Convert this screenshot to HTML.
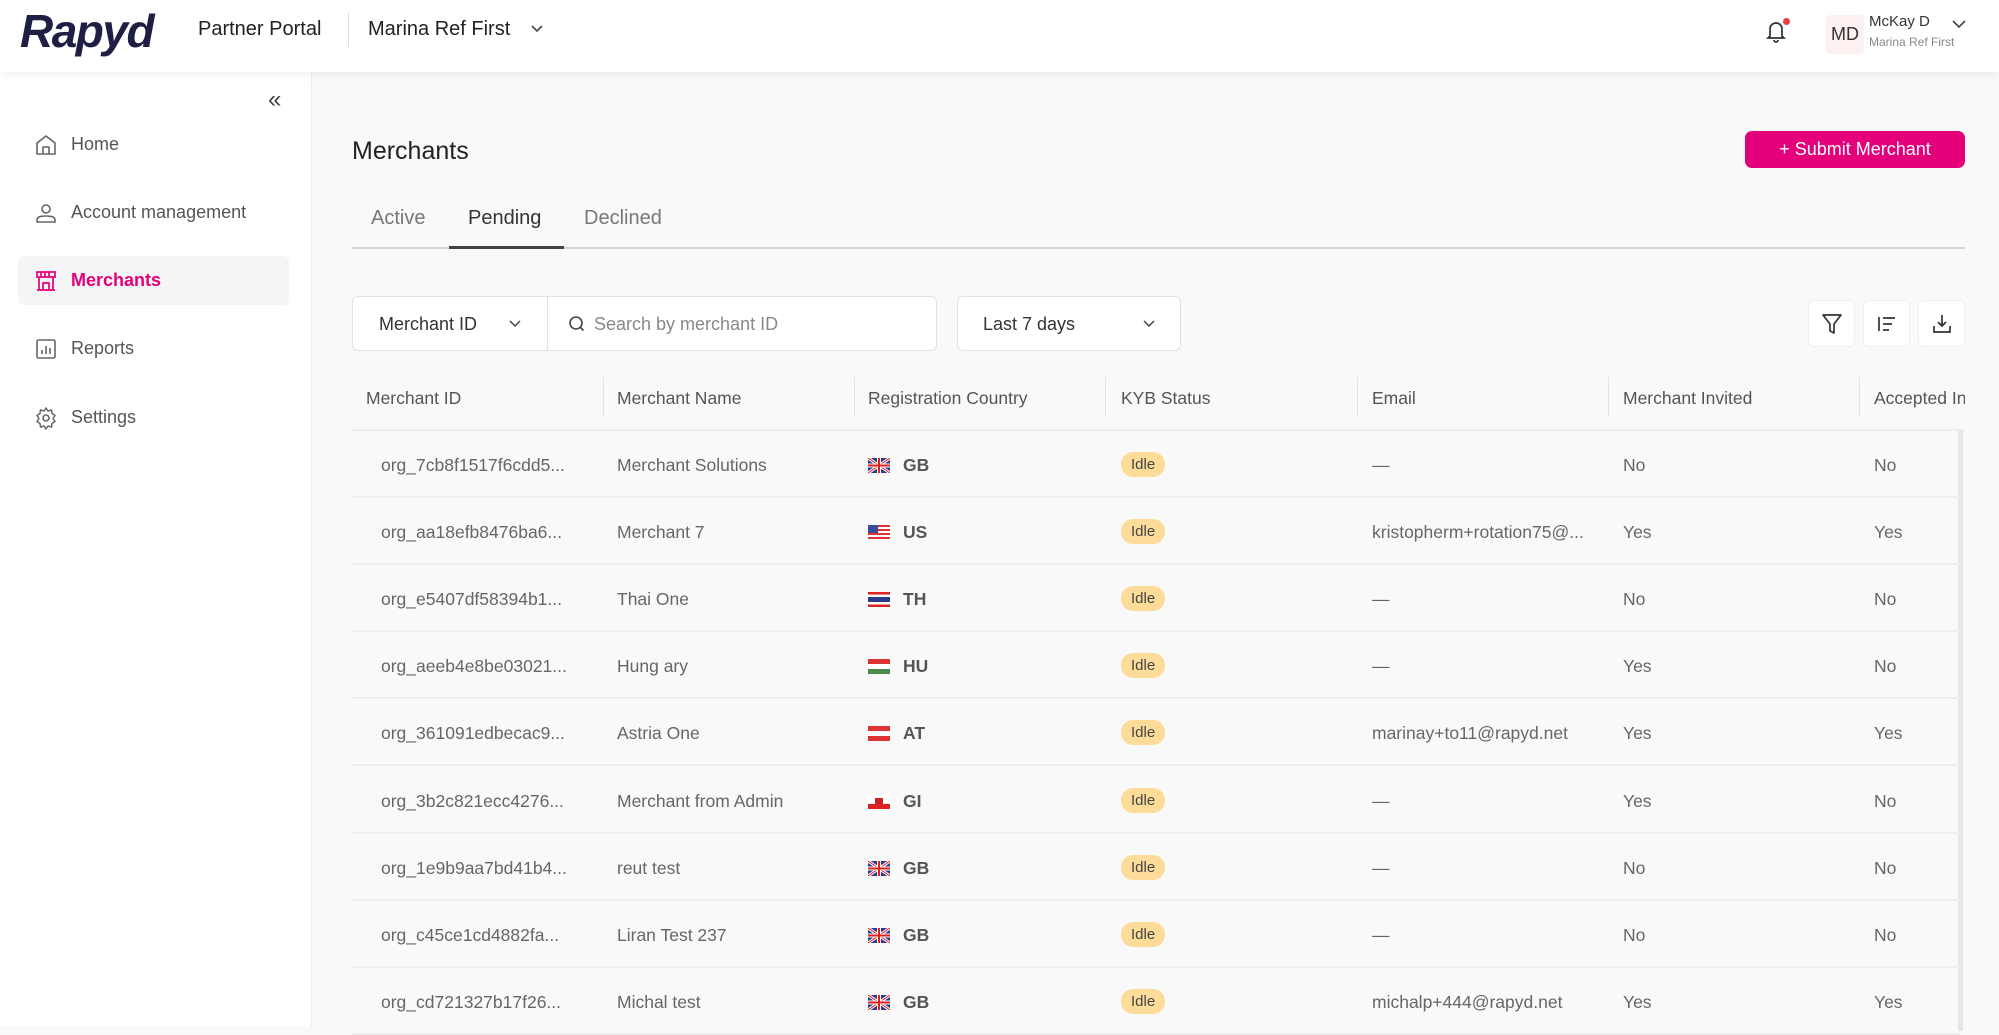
<!DOCTYPE html>
<html><head><meta charset="utf-8"><style>
*{box-sizing:border-box;margin:0;padding:0}
body{width:1999px;height:1026px;overflow:hidden;font-family:"Liberation Sans",sans-serif;background:#f9f9f9;position:relative;color:#333}
.abs{position:absolute}
.hdr{left:0;top:0;width:1999px;height:72px;background:#fff;box-shadow:0 2px 10px rgba(0,0,0,.07);z-index:2}
.side{left:0;top:72px;width:312px;height:954px;background:#fff;border-right:1px solid #ececec}
.nav{position:absolute;left:18px;width:271px;height:49px;border-radius:6px;display:flex;align-items:center;font-size:18px;color:#555}
.nav svg{position:absolute;left:16px}
.nav span{position:absolute;left:53px}
.th{position:absolute;top:388px;font-size:17.5px;color:#555}
.sep{position:absolute;top:377px;width:1px;height:40px;background:#e3e3e3}
.row{position:absolute;left:352px;width:1608px;height:67px;border-bottom:2px solid #ededed;font-size:17.5px;color:#666}
.row div{position:absolute;top:24px;white-space:nowrap}
.idle{background:#fddc9a;color:#444;border-radius:12px;font-size:15px;padding:4px 10px;top:21px!important}
.cc{font-weight:bold;color:#555}
.ibtn{position:absolute;top:300px;width:47px;height:47px;background:#fff;border:1px solid #eee;border-radius:6px;display:flex;align-items:center;justify-content:center}
</style></head><body>
<div class="abs hdr">
 <div class="abs" style="left:20px;top:4px;font-size:46px;font-weight:bold;font-style:italic;color:#1f1f44;letter-spacing:-1.5px">Rapyd</div>
 <div class="abs" style="left:198px;top:18px;font-size:20px;color:#222">Partner Portal</div>
 <div class="abs" style="left:348px;top:13px;width:1px;height:34px;background:#ddd"></div>
 <div class="abs" style="left:368px;top:18px;font-size:20px;color:#222">Marina Ref First</div>
 <svg class="abs" style="left:530px;top:24px" width="14" height="10" viewBox="0 0 14 10"><path d="M2 2l5 5 5-5" stroke="#444" stroke-width="1.6" fill="none"/></svg>
 <svg class="abs" style="left:1764px;top:18px" width="24" height="26" viewBox="0 0 24 26"><path d="M6 18V11a6 6 0 0 1 12 0v7l2 2H4z M10 22a2 2 0 0 0 4 0" stroke="#333" stroke-width="1.7" fill="none"/></svg>
 <div class="abs" style="left:1783px;top:18px;width:7px;height:7px;border-radius:50%;background:#e84040"></div>
 <div class="abs" style="left:1826px;top:15px;width:38px;height:39px;background:#fdf0f0;border-radius:4px;font-size:18px;line-height:39px;text-align:center;color:#333">MD</div>
 <div class="abs" style="left:1869px;top:13px;font-size:15px;color:#333">McKay D</div>
 <div class="abs" style="left:1869px;top:35px;font-size:12px;color:#888">Marina Ref First</div>
 <svg class="abs" style="left:1951px;top:19px" width="16" height="10" viewBox="0 0 16 10"><path d="M2 2l6 6 6-6" stroke="#444" stroke-width="1.6" fill="none"/></svg>
</div>
<div class="abs side">
 <div class="abs" style="left:268px;top:14px;font-size:24px;color:#444">«</div>
 <div class="nav" style="top:48px"><svg width="24" height="24" viewBox="0 0 24 24"><path d="M3 10l9-7 9 7v11H3z M9 21v-7h6v7" stroke="#666" stroke-width="1.6" fill="none" stroke-linejoin="round"/></svg><span>Home</span></div>
 <div class="nav" style="top:116px"><svg width="24" height="24" viewBox="0 0 24 24"><circle cx="12" cy="8" r="4" stroke="#666" stroke-width="1.6" fill="none"/><path d="M3 21v-2c0-3 3-4 9-4s9 1 9 4v2z" stroke="#666" stroke-width="1.6" fill="none"/></svg><span>Account management</span></div>
 <div class="nav" style="top:184px;background:#f5f5f5;color:#e5007b;font-weight:bold"><svg width="24" height="24" viewBox="0 0 24 24"><path d="M3 3h18v5H3z M5 8v13h14V8 M9 21v-7h6v7 M3 21h18 M7 3v5 M11 3v5 M15 3v5" stroke="#e5007b" stroke-width="1.7" fill="none"/></svg><span>Merchants</span></div>
 <div class="nav" style="top:252px"><svg width="24" height="24" viewBox="0 0 24 24"><rect x="3" y="3" width="18" height="18" rx="1.5" stroke="#666" stroke-width="1.6" fill="none"/><path d="M8 17v-4 M12 17V9 M16 17v-6" stroke="#666" stroke-width="1.6"/></svg><span>Reports</span></div>
 <div class="nav" style="top:321px"><svg width="24" height="24" viewBox="0 0 24 24"><circle cx="12" cy="12" r="3" stroke="#666" stroke-width="1.6" fill="none"/><path d="M12 2l2 3 3.5-1 .5 3.5 3 2-2 3 2 3-3 2-.5 3.5-3.5-1-2 3-2-3-3.5 1L6 17.5l-3-2 2-3-2-3 3-2L6.5 4 10 5z" stroke="#666" stroke-width="1.5" fill="none" stroke-linejoin="round"/></svg><span>Settings</span></div>
</div>
<div class="abs" style="left:352px;top:137px;font-size:25px;color:#222">Merchants</div>
<div class="abs" style="left:1745px;top:131px;width:220px;height:37px;background:#e5007b;border-radius:7px;color:#fff;font-size:18px;line-height:37px;text-align:center"><span style="font-weight:300">+</span> Submit Merchant</div>
<div class="abs" style="left:371px;top:207px;font-size:20px;color:#777">Active</div>
<div class="abs" style="left:468px;top:207px;font-size:20px;color:#333">Pending</div>
<div class="abs" style="left:584px;top:207px;font-size:20px;color:#777">Declined</div>
<div class="abs" style="left:352px;top:247px;width:1613px;height:2px;background:#d6d6d6"></div>
<div class="abs" style="left:449px;top:246px;width:115px;height:3px;background:#444"></div>
<div class="abs" style="left:352px;top:296px;width:585px;height:55px;background:#fff;border:1px solid #e2e2e2;border-radius:6px"></div>
<div class="abs" style="left:547px;top:296px;width:1px;height:55px;background:#e2e2e2"></div>
<div class="abs" style="left:379px;top:314px;font-size:18px;color:#333">Merchant ID</div>
<svg class="abs" style="left:508px;top:319px" width="14" height="10" viewBox="0 0 14 10"><path d="M2 2l5 5 5-5" stroke="#444" stroke-width="1.5" fill="none"/></svg>
<svg class="abs" style="left:568px;top:315px" width="18" height="18" viewBox="0 0 18 18"><circle cx="8" cy="8" r="6" stroke="#444" stroke-width="1.6" fill="none"/><path d="M12.5 12.5l3 3" stroke="#444" stroke-width="1.6"/></svg>
<div class="abs" style="left:594px;top:314px;font-size:18px;color:#888">Search by merchant ID</div>
<div class="abs" style="left:957px;top:296px;width:224px;height:55px;background:#fff;border:1px solid #e2e2e2;border-radius:6px"></div>
<div class="abs" style="left:983px;top:314px;font-size:18px;color:#333">Last 7 days</div>
<svg class="abs" style="left:1142px;top:319px" width="14" height="10" viewBox="0 0 14 10"><path d="M2 2l5 5 5-5" stroke="#444" stroke-width="1.5" fill="none"/></svg>
<div class="ibtn" style="left:1808px"><svg width="22" height="24" viewBox="0 0 22 24"><path d="M2 3h18l-7 9v9l-4-2v-7z" stroke="#333" stroke-width="1.7" fill="none" stroke-linejoin="round"/></svg></div>
<div class="ibtn" style="left:1863px"><svg width="22" height="20" viewBox="0 0 22 20"><path d="M3 3v14 M7 4h12 M7 10h9 M7 16h6" stroke="#333" stroke-width="1.7"/></svg></div>
<div class="ibtn" style="left:1918px"><svg width="22" height="22" viewBox="0 0 22 22"><path d="M11 2v11 M7 9l4 4 4-4 M3 13v6h16v-6" stroke="#333" stroke-width="1.7" fill="none"/></svg></div>
<div class="th" style="left:366px">Merchant ID</div>
<div class="th" style="left:617px">Merchant Name</div>
<div class="th" style="left:868px">Registration Country</div>
<div class="th" style="left:1121px">KYB Status</div>
<div class="th" style="left:1372px">Email</div>
<div class="th" style="left:1623px">Merchant Invited</div>
<div class="th" style="left:1874px;width:91px;overflow:hidden;white-space:nowrap">Accepted Invite</div>
<div class="sep" style="left:603px"></div><div class="sep" style="left:854px"></div><div class="sep" style="left:1105px"></div><div class="sep" style="left:1357px"></div><div class="sep" style="left:1608px"></div><div class="sep" style="left:1859px"></div>
<div class="abs" style="left:352px;top:429px;width:1613px;height:2px;background:#ececec"></div>
<div class="abs" style="left:1958px;top:431px;width:5px;height:600px;background:#e6e6e6"></div>
<div id="rows"></div>
<script>
var d=[["org_7cb8f1517f6cdd5...","Merchant Solutions","GB","—","No","No"],["org_aa18efb8476ba6...","Merchant 7","US","kristopherm+rotation75@...","Yes","Yes"],["org_e5407df58394b1...","Thai One","TH","—","No","No"],["org_aeeb4e8be03021...","Hung ary","HU","—","Yes","No"],["org_361091edbecac9...","Astria One","AT","marinay+to11@rapyd.net","Yes","Yes"],["org_3b2c821ecc4276...","Merchant from Admin","GI","—","Yes","No"],["org_1e9b9aa7bd41b4...","reut test","GB","—","No","No"],["org_c45ce1cd4882fa...","Liran Test 237","GB","—","No","No"],["org_cd721327b17f26...","Michal test","GB","michalp+444@rapyd.net","Yes","Yes"]];
var f={GB:'<rect width="22" height="15" fill="#2a3a8c"/><path d="M0 0L22 15M22 0L0 15" stroke="#fff" stroke-width="3"/><path d="M0 0L22 15M22 0L0 15" stroke="#d22" stroke-width="1"/><path d="M11 0v15M0 7.5h22" stroke="#fff" stroke-width="4"/><path d="M11 0v15M0 7.5h22" stroke="#d22" stroke-width="2"/>',
US:'<rect width="22" height="15" fill="#fff"/><path d="M0 1h22M0 5h22M0 9h22M0 13h22" stroke="#d33" stroke-width="2"/><rect width="10" height="8" fill="#3a4a9c"/>',
TH:'<rect width="22" height="15" fill="#d22"/><rect y="2.5" width="22" height="10" fill="#fff"/><rect y="5" width="22" height="5" fill="#2a3a8c"/>',
HU:'<rect width="22" height="5" fill="#d33"/><rect y="5" width="22" height="5" fill="#fff"/><rect y="10" width="22" height="5" fill="#4a8a4a"/>',
AT:'<rect width="22" height="15" fill="#d33"/><rect y="5" width="22" height="5" fill="#fff"/>',
GI:'<rect width="22" height="15" fill="#fff"/><rect y="10" width="22" height="5" fill="#d22"/><rect x="7" y="4" width="8" height="6" fill="#c22"/>'};
var h='';d.forEach(function(r,i){var t=431+i*67.1;
h+='<div class="row" style="top:'+t+'px"><div style="left:29px">'+r[0]+'</div><div style="left:265px">'+r[1]+'</div><div style="left:516px;top:26px"><svg width="22" height="15">'+f[r[2]]+'</svg></div><div class="cc" style="left:551px">'+r[2]+'</div><div class="idle" style="left:769px">Idle</div><div style="left:1020px">'+r[3]+'</div><div style="left:1271px">'+r[4]+'</div><div style="left:1522px">'+r[5]+'</div></div>';});
document.getElementById('rows').innerHTML=h;
</script>
</body></html>
